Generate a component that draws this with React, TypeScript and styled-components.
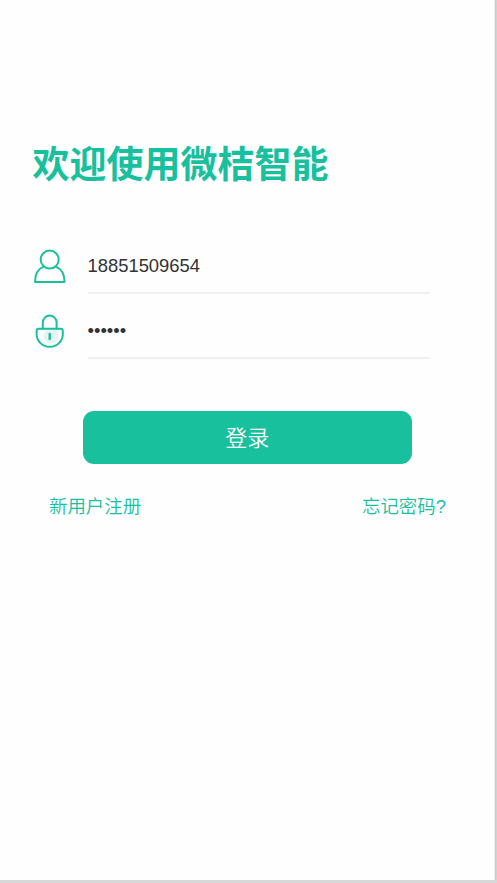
import React from "react";
import styled, { createGlobalStyle } from "styled-components";

const GREEN = "#18c09d";

const GlobalStyle = createGlobalStyle`
  * { box-sizing: border-box; }
  body {
    margin: 0;
    background: #d8d8d8;
    overflow: hidden;
    font-family: "Liberation Sans", "Noto Sans CJK SC", sans-serif;
  }
`;

const Screen = styled.main`
  width: 495px;
  height: 880px;
  padding: 138px 0 0;
  background: #fefefe;
  border-right: 1px solid #ededed;
  box-shadow: 0 0 3px rgba(0, 0, 0, 0.16);
`;

const Title = styled.h1`
  margin: 0 0 0 32.5px;
  height: 56px;
  line-height: 56px;
  font-size: 37px;
  font-weight: 700;
  color: ${GREEN};
  white-space: nowrap;
`;

const Form = styled.form`
  margin: 44px 0 0 33px;
`;

const Field = styled.label`
  display: flex;
  height: 64.5px;
`;

const FieldIcon = styled.svg`
  flex: none;
  width: 34px;
  height: 56px;
  fill: none;
  stroke: ${GREEN};
  stroke-width: 2;
  stroke-linejoin: round;
  stroke-linecap: round;
`;

const FieldValue = styled.span`
  width: 342px;
  height: 56px;
  margin-left: 20.5px;
  line-height: 55px;
  font-size: 18.4px;
  color: #333;
  border-bottom: 2px solid #f0f0f0;
`;

const LoginButton = styled.button`
  display: block;
  width: 329.5px;
  height: 53px;
  margin: 44px 0 0 49.5px;
  padding: 0 0 3px;
  border: 0;
  border-radius: 11px;
  background: ${GREEN};
  color: #fff;
  font: 350 22px/50px "Noto Sans CJK SC", sans-serif;
`;

const Links = styled.nav`
  display: flex;
  justify-content: space-between;
  margin: 29px 48px 0 49px;
`;

const TextLink = styled.a`
  font-size: 18.45px;
  font-weight: 350;
  line-height: 28px;
  color: ${GREEN};
`;

export default function App() {
  return (
    <>
      <GlobalStyle />
      <Screen>
        <Title>欢迎使用微桔智能</Title>
        <Form>
          <Field>
            <FieldIcon viewBox="0 0 34 56">
              <circle cx="16.7" cy="21.6" r="9" />
              <path d="M10.6 28.6C5.2 30.8 2 36.5 2 44h29.5C31.5 36.5 28.3 30.8 22.8 28.6" />
            </FieldIcon>
            <FieldValue>18851509654</FieldValue>
          </Field>
          <Field>
            <FieldIcon viewBox="0 1 34 56">
              <circle cx="18" cy="34" r="7.5" fill="#e3f6f1" stroke="none" />
              <path d="M9.8 26.5V20.5a6.9 6.9 0 0 1 13.8 0v6" />
              <path d="M6 26.7H27.4q2.4 0 2.4 2.4v3.2a13.1 12.5 0 0 1-26.2 0v-3.2q0-2.4 2.4-2.4Z" />
              <path d="M16.7 32v5" strokeWidth="2.4" />
            </FieldIcon>
            <FieldValue>••••••</FieldValue>
          </Field>
          <LoginButton type="button">登录</LoginButton>
        </Form>
        <Links>
          <TextLink>新用户注册</TextLink>
          <TextLink>忘记密码?</TextLink>
        </Links>
      </Screen>
    </>
  );
}
